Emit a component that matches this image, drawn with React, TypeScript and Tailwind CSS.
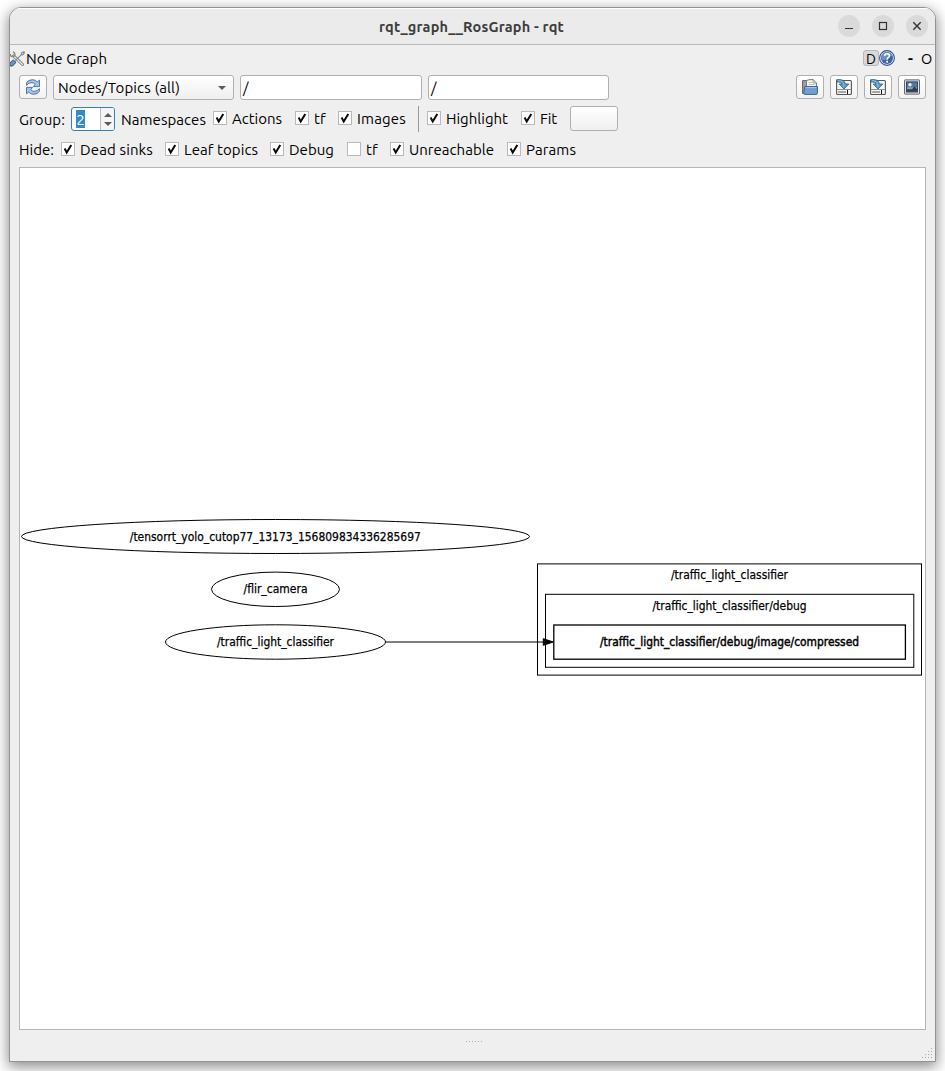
import { useLayoutEffect, useRef, useState } from "react";
import type { ReactNode } from "react";

/** Single-line text whose letter spacing is adjusted so that it fills `width` pixels. */
function Fit({ text, width, className = "" }: { text: string; width: number; className?: string }) {
  const ref = useRef<HTMLSpanElement>(null);
  const [spacing, setSpacing] = useState(0);
  useLayoutEffect(() => {
    if (!ref.current) return;
    const natural = ref.current.getBoundingClientRect().width;
    setSpacing((s) => s + (width - natural) / text.length);
  }, [text, width]);
  return (
    <span className={`block shrink-0 ${className}`} style={{ width }}>
      <span ref={ref} className="inline-block whitespace-nowrap" style={{ letterSpacing: spacing }}>
        {text}
      </span>
    </span>
  );
}

function Check({ text, width, checked = true, className = "" }: { text: string; width: number; checked?: boolean; className?: string }) {
  return (
    <div className={`flex shrink-0 items-center ${className}`}>
      <span className="mr-[5px] flex size-3.5 shrink-0 items-center justify-center border border-[#b9b9b9] bg-white">
        {checked && (
          <svg viewBox="0 0 12 12" className="size-3" fill="none" stroke="#0a0a0a" strokeWidth="2">
            <path d="M2.6 5.6 L4.7 9.4 L9.3 1.9" />
          </svg>
        )}
      </span>
      <Fit text={text} width={width} className="pt-0.5" />
    </div>
  );
}

function ToolButton({ children }: { children: ReactNode }) {
  return (
    <div className="flex h-6 w-7 shrink-0 items-center justify-center rounded-[3px] border border-[#b0b0b0] bg-linear-to-b from-white to-[#f3f3f3]">
      {children}
    </div>
  );
}

function RefreshIcon() {
  return (
    <svg viewBox="0 0 16 16" className="size-4">
      <path d="M1.6 6.4 V3.6 Q3.4 .7 7.6 .7 Q10.6 .8 12.2 2.9 L14.5 1.2 V7.6 H8.4 L10.2 5.3 Q8.6 3.4 6 3.7 Q3.4 4 1.6 6.4Z" fill="#a9c2e4" stroke="#3f6ca9" strokeWidth=".9" strokeLinejoin="round" />
      <path d="M14.4 9.6 V12.4 Q12.6 15.3 8.4 15.3 Q5.4 15.2 3.8 13.1 L1.5 14.8 V8.4 H7.6 L5.8 10.7 Q7.4 12.6 10 12.3 Q12.6 12 14.4 9.6Z" fill="#a9c2e4" stroke="#3f6ca9" strokeWidth=".9" strokeLinejoin="round" />
    </svg>
  );
}

function FolderIcon() {
  return (
    <svg viewBox="0 0 16 16" className="size-4">
      <path d="M.6 14.5 V1.6 H5.4 V14.5Z" fill="#a0a0a0" stroke="#606060" />
      <path d="M4.5 9 V1.5 Q6 .5 11.2 .5 L14.4 4 V9Z" fill="#f6f6f4" stroke="#777975" />
      <path d="M6.5 3.5 H10M6.5 5.5 H12.5" fill="none" stroke="#c2c2c0" />
      <path d="M11 .8 V4 H14.2" fill="none" stroke="#8a8a88" strokeWidth=".8" />
      <path d="M2.8 7.5 H15.5 V13.5 Q15.5 15.4 14 15.4 H2.2 Q1.4 15 1.8 14Z" fill="#6f9fd3" stroke="#3465a4" />
      <path d="M3.7 8.6 H14.4" stroke="#a9c8e8" />
    </svg>
  );
}

function SaveIcon() {
  return (
    <svg viewBox="0 0 16 16" className="size-4">
      <rect x=".6" y="1.5" width="14.8" height="14" rx="1" fill="#f4f4f2" stroke="#555753" strokeWidth="1.1" />
      <path d="M1.2 10.5 H14.8" stroke="#8e908b" />
      <path d="M2.2 13 H10" stroke="#a4a6a2" strokeWidth="1.8" />
      <path d="M11.5 11 V15" stroke="#111" strokeWidth="1" />
      <path d="M.6 .7 Q8.7 -.2 9.4 5 H12.8 L8 10 L3.2 5 H6 Q5.5 2.7 .6 3Z" fill="#5e9bc5" stroke="#225f8e" strokeWidth=".8" strokeLinejoin="round" />
      <path d="M2 1.7 Q7.4 1.5 7.9 6.1 V8" fill="none" stroke="#9ac5df" strokeWidth=".8" />
    </svg>
  );
}

function ImageIcon() {
  return (
    <svg viewBox="0 0 16 16" className="size-4">
      <rect x=".5" y=".9" width="15" height="14.2" rx=".5" fill="#e5e5e3" stroke="#626460" />
      <rect x="2.5" y="2.9" width="11" height="10.1" fill="#5577a4" stroke="#29456c" />
      <path d="M3 8.2 H13 V10 H3Z" fill="#8aa0b2" />
      <path d="M3 10.6 H8 L10.3 7.2 L13 10 V12.5 H3Z" fill="#353d47" />
      <circle cx="6" cy="5.7" r="1.7" fill="#f5f2ce" />
    </svg>
  );
}

function ToolsIcon() {
  return (
    <svg viewBox="0 0 16 16" className="-ml-px size-4 shrink-0" fill="none">
      <path d="M4.6 4.9 L13.6 13.5" stroke="#777975" strokeWidth="3" strokeLinecap="round" />
      <path d="M4.6 4.9 L13.6 13.5" stroke="#e5e5e3" strokeWidth="1.4" strokeLinecap="round" />
      <path d="M1.2 2.8 Q1 5.4 3.4 5.7 Q5.8 5.6 6 3.4 Q5.9 1.4 3.9 .9" stroke="#858783" strokeWidth="1.2" />
      <path d="M6.4 9.6 L12.2 3.8 L12.8 1.8 L15 .8 L15.3 1.6 L14.4 3.4 L12.6 4.2" stroke="#858783" strokeWidth="1.2" />
      <path d="M1.1 14.8 Q-.4 12.8 2.2 10.7 L4.4 9 L6.9 11.2 L5.1 13.6 Q2.8 16.2 1.1 14.8Z" fill="#7292bd" stroke="#2d4f80" />
    </svg>
  );
}

function HelpIcon() {
  return (
    <svg viewBox="0 0 16 16" className="size-4 shrink-0">
      <circle cx="8" cy="8" r="7.4" fill="#e6edf6" stroke="#2e5690" strokeWidth="1.1" />
      <circle cx="8" cy="8" r="6" fill="#3c659f" />
      <path d="M2.4 8 A5.6 5.6 0 0 1 13.4 6 Q8 6 6 10 Q3.6 11 2.4 8Z" fill="#6d90bf" />
      <path d="M5.6 5.8 Q5.8 3.8 8.1 3.8 Q10.6 3.9 10.4 6 Q10.3 7.1 9 7.8 Q8.1 8.3 8.1 9.8" fill="none" stroke="#fff" strokeWidth="1.6" />
      <rect x="7.2" y="10.8" width="1.8" height="1.8" fill="#fff" />
    </svg>
  );
}

function NodeText({ x, y, width, bold = false, children }: { x: number; y: number; width: number; bold?: boolean; children: string }) {
  return (
    <text
      x={x - width / 2}
      y={y}
      textLength={width}
      lengthAdjust="spacingAndGlyphs"
      fontSize="12"
      fill="#000"
      stroke="#000"
      strokeWidth={bold ? 0.45 : 0.25}
      className="font-['DejaVu_Sans',sans-serif]"
    >
      {children}
    </text>
  );
}

function Graph() {
  return (
    <svg width="905" height="861" viewBox="20 168 905 861" className="block" fill="none" stroke="#000">
      <ellipse cx="275.5" cy="536.5" rx="254" ry="17" />
      <ellipse cx="275.5" cy="589.3" rx="64" ry="17.2" />
      <ellipse cx="275.5" cy="642" rx="110" ry="17.2" />
      <rect x="537.5" y="563.9" width="384" height="111.2" />
      <rect x="545.5" y="594.3" width="368.3" height="73" />
      <rect x="553.8" y="625" width="351.6" height="34.2" strokeWidth="1.3" />
      <path d="M385.5 642 H544" />
      <path d="M543.3 638.7 L553.3 642 L543.3 645.3Z" fill="#000" />
      <g stroke="none">
        <NodeText x={275.3} y={541} width={291}>/tensorrt_yolo_cutop77_13173_156809834336285697</NodeText>
        <NodeText x={275.5} y={593.4} width={64}>/flir_camera</NodeText>
        <NodeText x={275.5} y={646.3} width={117}>/traffic_light_classifier</NodeText>
        <NodeText x={729.5} y={579.4} width={117}>/traffic_light_classifier</NodeText>
        <NodeText x={729.5} y={610} width={154}>/traffic_light_classifier/debug</NodeText>
        <NodeText x={729.5} y={646.3} width={259} bold>/traffic_light_classifier/debug/image/compressed</NodeText>
      </g>
    </svg>
  );
}

const roundButton = "flex size-[22px] items-center justify-center rounded-full bg-[#dadada]";

export default function App() {
  return (
    <div className="h-[1071px] w-[945px] overflow-hidden bg-white pt-[7px] pl-[9px] font-['Ubuntu','Noto_Sans',sans-serif] text-[15px] leading-5 text-black">
      <div className="flex h-[1055px] w-[927px] flex-col overflow-hidden rounded-t-[12px] border border-[#929292] bg-[#efefef] shadow-[0_4px_14px_1px_rgba(0,0,0,0.45)]">
        <header className="flex h-[37px] shrink-0 items-center border-b border-[#b9b9b9] bg-[#ebebeb] shadow-[inset_0_1px_0_#fff]">
          <Fit text="rqt_graph__RosGraph - rqt" width={185} className="ml-[369px] pt-0.5 text-[14.5px] font-bold text-[#3d3d3d]" />
          <div className="ml-auto flex gap-3 pr-[7px]">
            <span className={roundButton}>
              <svg viewBox="0 0 22 22" className="size-[22px]" stroke="#333" strokeWidth="1.2"><path d="M7 13.5 H15" /></svg>
            </span>
            <span className={roundButton}>
              <svg viewBox="0 0 22 22" className="size-[22px]" fill="none" stroke="#333" strokeWidth="1.2"><rect x="7.5" y="7.5" width="7" height="7" /></svg>
            </span>
            <span className={roundButton}>
              <svg viewBox="0 0 22 22" className="size-[22px]" stroke="#333" strokeWidth="1.4"><path d="M7.3 7.3 L14.7 14.7 M14.7 7.3 L7.3 14.7" /></svg>
            </span>
          </div>
        </header>

        <div className="flex h-[30px] shrink-0 items-center pb-0.5">
          <ToolsIcon />
          <Fit text="Node Graph" width={81} className="ml-px" />
          <div className="ml-auto flex items-center pr-[3px]">
            <div className="flex pb-0.5">
              <span className="flex size-4 items-center justify-center rounded-[3px] border border-[#b8b8b8] bg-[#d9d9d9] pt-0.5 text-[14px] leading-none">D</span>
              <HelpIcon />
            </div>
            <span className="ml-[13px] w-[6px] font-bold">-</span>
            <Fit text="O" width={11} className="ml-[7px] text-[14.5px]" />
          </div>
        </div>

        <div className="flex h-[25px] shrink-0 items-start px-[9px]">
          <ToolButton><RefreshIcon /></ToolButton>
          <div className="ml-1.5 flex h-[25px] w-[181px] items-center justify-between rounded-[3px] border border-[#b0b0b0] bg-linear-to-b from-white to-[#efefef] pr-[7px] pl-1">
            <Fit text="Nodes/Topics (all)" width={122} />
            <svg viewBox="0 0 8 4" className="h-1 w-2"><path d="M0 0 H8 L4 4Z" fill="#5b5b5b" /></svg>
          </div>
          <div className="ml-1.5 flex h-[25px] w-[182px] items-center rounded-[3px] border border-[#b0b0b0] bg-white pl-0.5">/</div>
          <div className="ml-1.5 flex h-[25px] w-[181px] items-center rounded-[3px] border border-[#b0b0b0] bg-white pl-0.5">/</div>
          <div className="ml-auto flex gap-1.5">
            <ToolButton><FolderIcon /></ToolButton>
            <ToolButton><SaveIcon /></ToolButton>
            <ToolButton><SaveIcon /></ToolButton>
            <ToolButton><ImageIcon /></ToolButton>
          </div>
        </div>

        <div className="mt-1.5 flex h-[26px] shrink-0 items-center px-[9px]">
          <Fit text="Group:" width={46} className="pt-0.5" />
          <div className="ml-1.5 flex h-6 w-11 overflow-hidden rounded-[3px] border border-[#3382b5] bg-white">
            <div className="flex flex-1 items-center pl-1">
              <span className="flex h-[18px] w-[9px] items-center justify-center bg-[#308cc6] pt-0.5 text-white">2</span>
            </div>
            <div className="flex w-[14px] flex-col items-center justify-center gap-[5px] border-l border-[#bcbcbc] bg-[#f5f5f5]">
              <svg viewBox="0 0 8 4" className="h-1 w-2"><path d="M0 4 L4 0 L8 4Z" fill="#5b5b5b" /></svg>
              <svg viewBox="0 0 8 4" className="h-1 w-2"><path d="M0 0 L4 4 L8 0Z" fill="#5b5b5b" /></svg>
            </div>
          </div>
          <Fit text="Namespaces" width={85} className="ml-1.5 pt-0.5" />
          <div className="ml-[7px] flex h-full items-center pb-0.5">
            <Check text="Actions" width={50} />
            <Check text="tf" width={12} className="ml-[13px]" />
            <Check text="Images" width={49} className="ml-3" />
          </div>
          <span className="ml-3 h-[26px] w-px bg-[#999]" />
          <div className="ml-2 flex h-full items-center pb-0.5">
            <Check text="Highlight" width={62} />
            <Check text="Fit" width={17} className="ml-[13px]" />
          </div>
          <div className="ml-[13px] h-[25px] w-12 self-start rounded-[3px] border border-[#b0b0b0] bg-linear-to-b from-white to-[#f0f0f0]" />
        </div>

        <div className="mt-[7px] flex h-5 shrink-0 items-center px-[9px]">
          <Fit text="Hide:" width={35} className="pt-0.5" />
          <Check text="Dead sinks" width={73} className="ml-[7px]" />
          <Check text="Leaf topics" width={74} className="ml-3" />
          <Check text="Debug" width={45} className="ml-3" />
          <Check text="tf" width={12} checked={false} className="ml-[13px]" />
          <Check text="Unreachable" width={85} className="ml-3" />
          <Check text="Params" width={50} className="ml-[13px]" />
        </div>

        <main className="mx-[9px] mt-2 h-[863px] w-[907px] shrink-0 border border-[#b5b5b5] bg-white">
          <Graph />
        </main>

        <footer className="flex min-h-0 flex-1 items-end justify-end">
          <svg width="16" height="2" className="mr-[440px] mb-[18px]" fill="#b0b0b0">
            {[0, 3, 6, 9, 12, 15].map((x) => <rect key={x} x={x} width="1" height="1" />)}
          </svg>
          <svg width="11" height="11" className="mr-0.5 mb-0.5" fill="#aaa">
            {[0, 1, 2, 3].flatMap((r) =>
              Array.from({ length: r + 1 }, (_, i) => <rect key={`${r}-${i}`} x={9 - 3 * i} y={3 * r} width="1" height="1" />)
            )}
          </svg>
        </footer>
      </div>
    </div>
  );
}
